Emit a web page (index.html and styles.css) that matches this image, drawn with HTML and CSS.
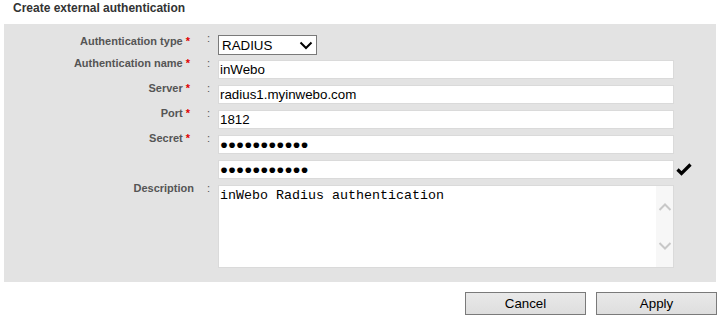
FILE: index.html
```html
<!DOCTYPE html>
<html lang="en">
<head>
<meta charset="utf-8">
<title>Create external authentication</title>
<link rel="stylesheet" href="styles.css">
</head>
<body>
<h1 class="title">Create external authentication</h1>
<form class="panel">
  <div class="form-grid">
    <label class="lbl lbl-first">Authentication type<span class="req">*</span></label>
    <span class="colon colon-first">:</span>
    <div class="select-wrap">
      <select class="select"><option>RADIUS</option></select>
      <svg class="select-arrow" width="14" height="9" viewBox="0 0 14 9"><path d="M1.5 1.5 L7 7 L12.5 1.5" fill="none" stroke="#000" stroke-width="2"/></svg>
    </div>
    <span></span>

    <label class="lbl">Authentication name<span class="req">*</span></label>
    <span class="colon">:</span>
    <input class="field" type="text" value="inWebo">
    <span></span>

    <label class="lbl">Server<span class="req">*</span></label>
    <span class="colon">:</span>
    <input class="field" type="text" value="radius1.myinwebo.com">
    <span></span>

    <label class="lbl">Port<span class="req">*</span></label>
    <span class="colon">:</span>
    <input class="field" type="text" value="1812">
    <span></span>

    <label class="lbl">Secret<span class="req">*</span></label>
    <span class="colon">:</span>
    <input class="field dots" type="text" value="●●●●●●●●●●●">
    <span></span>

    <span></span>
    <span></span>
    <input class="field dots" type="text" value="●●●●●●●●●●●">
    <svg class="check" width="16" height="13" viewBox="0 0 16 13"><path d="M1.5 6.5 L5.5 10.5 L14.5 1.5" fill="none" stroke="#000" stroke-width="3.2"/></svg>

    <label class="lbl">Description</label>
    <span class="colon">:</span>
    <div class="textbox">
      <textarea class="textarea">inWebo Radius authentication</textarea>
      <div class="scrollbar">
        <svg width="14" height="10" viewBox="0 0 14 10"><path d="M1.5 8 L7 2.5 L12.5 8" fill="none" stroke="#c8c8c8" stroke-width="2"/></svg>
        <svg width="14" height="10" viewBox="0 0 14 10"><path d="M1.5 2 L7 7.5 L12.5 2" fill="none" stroke="#c8c8c8" stroke-width="2"/></svg>
      </div>
    </div>
    <span></span>
  </div>
</form>
<div class="actions">
  <button class="btn" type="button">Cancel</button>
  <button class="btn" type="button">Apply</button>
</div>
</body>
</html>
```

FILE: styles.css
```css
html, body {
  margin: 0;
  padding: 0;
  background: #ffffff;
}
body {
  width: 721px;
  font-family: "Liberation Sans", Arial, sans-serif;
}
.title {
  margin: 0;
  height: 24px;
  box-sizing: border-box;
  padding: 1px 0 0 13px;
  font-size: 12px;
  line-height: 14px;
  font-weight: bold;
  color: #333333;
}
.panel {
  margin: 0 5px 0 4px;
  background: #e3e3e3;
  padding: 11px 0 14px 0;
}
.form-grid {
  display: grid;
  grid-template-columns: 190px 24px 456px 42px;
  grid-template-rows: 19px 19px 19px 19px 19px 19px 83px;
  row-gap: 6px;
}
.lbl {
  margin-top: -3px;
  text-align: right;
  font-size: 11px;
  line-height: 13px;
  font-weight: bold;
  color: #555555;
  white-space: nowrap;
}
.lbl-first, .colon-first {
  margin-top: 0;
}
.req {
  color: #e00000;
  margin: 0 4px 0 3px;
}
.colon {
  margin-top: -3px;
  padding-left: 13px;
  font-size: 11px;
  line-height: 13px;
  color: #555555;
}
.select-wrap {
  position: relative;
  width: 99px;
  height: 20px;
}
.select {
  appearance: none;
  -webkit-appearance: none;
  width: 99px;
  height: 20px;
  margin: 0;
  box-sizing: border-box;
  border: 1px solid #7a7a7a;
  border-radius: 0;
  background: #ffffff;
  padding: 0 0 0 3px;
  font-family: "Liberation Sans", Arial, sans-serif;
  font-size: 13.333px;
  color: #000000;
}
.select-arrow {
  position: absolute;
  right: 4px;
  top: 6px;
  pointer-events: none;
}
.field {
  width: 456px;
  height: 19px;
  margin: 0;
  box-sizing: border-box;
  border: 1px solid #dadada;
  border-radius: 0;
  background: #ffffff;
  padding: 0 1px;
  font-family: "Liberation Sans", Arial, sans-serif;
  font-size: 13.333px;
  color: #000000;
  outline: none;
}
.dots {
  letter-spacing: 0;
}
.check {
  margin: 3px 0 0 2px;
}
.textbox {
  display: flex;
  width: 456px;
  height: 83px;
  box-sizing: border-box;
  border: 1px solid #dadada;
  background: #ffffff;
}
.textarea {
  flex: 1;
  margin: 0;
  border: 0;
  padding: 2px 1px;
  resize: none;
  overflow: hidden;
  outline: none;
  font-family: "Liberation Mono", "Courier New", monospace;
  font-size: 13.333px;
  color: #000000;
  background: #ffffff;
}
.scrollbar {
  width: 17px;
  background: #f7f7f7;
  display: flex;
  flex-direction: column;
  align-items: center;
  justify-content: space-between;
  padding: 16px 0 16px 0;
}
.scrollbar svg {
  display: block;
}
.actions {
  display: flex;
  justify-content: flex-end;
  gap: 10px;
  padding: 10px 4px 0 0;
}
.btn {
  width: 121px;
  height: 23px;
  margin: 0;
  box-sizing: border-box;
  border: 1px solid #7a7a7a;
  border-radius: 0;
  background: linear-gradient(#e9e9e9, #dedede);
  font-family: "Liberation Sans", Arial, sans-serif;
  font-size: 13.333px;
  color: #000000;
  padding: 0;
}
```
